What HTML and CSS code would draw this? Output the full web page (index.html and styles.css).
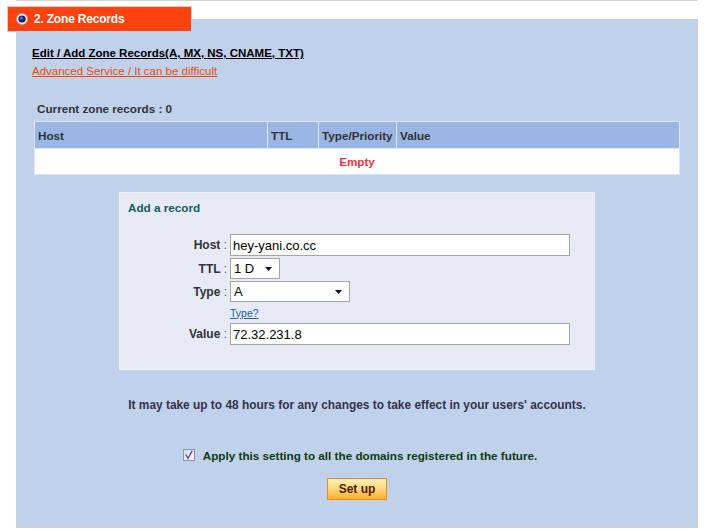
FILE: index.html
```html
<!DOCTYPE html>
<html>
<head>
<meta charset="utf-8">
<link rel="stylesheet" href="styles.css">
</head>
<body>
<div class="topline"></div>
<div class="tab">
  <svg class="tab-icon" width="12" height="12" viewBox="0 0 12 12">
    <defs>
      <radialGradient id="dot" cx="0.42" cy="0.4" r="0.6">
        <stop offset="0" stop-color="#8a8ad8"/>
        <stop offset="0.5" stop-color="#20207a"/>
        <stop offset="1" stop-color="#0a0a40"/>
      </radialGradient>
    </defs>
    <circle cx="6" cy="6" r="5.5" fill="#f4f4f8" stroke="#9a9aa8" stroke-width="0.8"/>
    <circle cx="6" cy="6" r="3.6" fill="url(#dot)"/>
  </svg>
  <span class="tab-title">2. Zone Records</span>
</div>
<div class="panel">
  <div class="intro">
    <div class="intro-title">Edit / Add Zone Records(A, MX, NS, CNAME, TXT)</div>
    <a class="intro-link" href="#">Advanced Service / It can be difficult</a>
  </div>
  <div class="current">Current zone records : 0</div>
  <table class="records">
    <thead>
      <tr>
        <th class="c-host">Host</th>
        <th class="c-ttl">TTL</th>
        <th class="c-type">Type/Priority</th>
        <th class="c-value">Value</th>
      </tr>
    </thead>
    <tbody>
      <tr><td class="empty" colspan="4">Empty</td></tr>
    </tbody>
  </table>

  <div class="addbox">
    <div class="addbox-title">Add a record</div>
    <div class="form">
      <div class="row">
        <div class="label">Host <span class="colon">:</span></div>
        <div class="field"><div class="input wide">hey-yani.co.cc</div></div>
      </div>
      <div class="row">
        <div class="label">TTL <span class="colon">:</span></div>
        <div class="field">
          <div class="select ttl"><span>1 D</span>
            <svg width="7" height="4" viewBox="0 0 7 4"><path d="M0 0 H7 L3.5 4 Z" fill="#0b0b55"/></svg>
          </div>
        </div>
      </div>
      <div class="row">
        <div class="label">Type <span class="colon">:</span></div>
        <div class="field">
          <div class="select type"><span>A</span>
            <svg width="7" height="4" viewBox="0 0 7 4"><path d="M0 0 H7 L3.5 4 Z" fill="#0b0b55"/></svg>
          </div>
        </div>
      </div>
      <div class="row help-row">
        <div class="label"></div>
        <div class="field"><a class="help" href="#">Type?</a></div>
      </div>
      <div class="row">
        <div class="label">Value <span class="colon">:</span></div>
        <div class="field"><div class="input wide">72.32.231.8</div></div>
      </div>
    </div>
  </div>

  <p class="notice">It may take up to 48 hours for any changes to take effect in your users' accounts.</p>

  <div class="apply">
    <svg class="check" width="12" height="12" viewBox="0 0 12 12">
      <defs>
        <linearGradient id="cb" x1="0" y1="0" x2="1" y2="1">
          <stop offset="0" stop-color="#d8d8e2"/>
          <stop offset="1" stop-color="#f6f6fa"/>
        </linearGradient>
      </defs>
      <rect x="0.5" y="0.5" width="11" height="11" fill="url(#cb)" stroke="#8e92a6"/>
      <path d="M2.8 5.6 L5 9.4 L9.2 1.6" fill="none" stroke="#4f4fb0" stroke-width="1.3"/>
    </svg>
    <span class="apply-text">Apply this setting to all the domains registered in the future.</span>
  </div>

  <div class="actions">
    <button class="setup" type="button">Set up</button>
  </div>
</div>
</body>
</html>
```

FILE: styles.css
```css
html, body {
  margin: 0;
  padding: 0;
  background: #ffffff;
}

body {
  font-family: "Liberation Sans", Arial, sans-serif;
  font-size: 12px;
  color: #333333;
}

.topline {
  width: 681px;
  height: 1px;
  margin-left: 16px;
  background: #d2d2d2;
}

.tab {
  position: relative;
  z-index: 1;
  display: flex;
  align-items: center;
  box-sizing: border-box;
  width: 185px;
  height: 26px;
  margin: 5px 0 0 7px;
  padding-left: 8px;
  background: #ff420e;
  border: 1px solid #cfcfcf;
}

.tab-icon {
  display: block;
  flex: none;
}

.tab-title {
  margin-left: 6px;
  color: #ffffff;
  font-weight: bold;
  font-size: 12px;
  letter-spacing: -0.2px;
}

.panel {
  box-sizing: border-box;
  width: 682px;
  margin: -13px 0 0 16px;
  padding: 24px 0 27px 0;
  background: #c0d1ec;
  border: 1px solid #cdcdcd;
}

.intro {
  margin-left: 15px;
}

.intro-title {
  line-height: 18px;
  font-weight: bold;
  font-size: 11.5px;
  color: #000000;
  text-decoration: underline;
}

.intro-link {
  display: inline-block;
  line-height: 18px;
  font-size: 11.5px;
  color: #f04a00;
  text-decoration: underline;
}

.current {
  margin: 20px 0 0 20px;
  line-height: 18px;
  font-weight: bold;
  font-size: 11.7px;
  color: #333333;
}

.records {
  margin: 3px 0 0 17px;
  width: 646px;
  border-collapse: collapse;
  border: 1px solid #dfe4ee;
  background: #ffffff;
}

.records th {
  height: 26px;
  padding: 0 0 0 3px;
  text-align: left;
  font-size: 11.7px;
  font-weight: bold;
  color: #333333;
  background: #9ab6e2;
  border-right: 1px solid #dde6f4;
  border-bottom: 1px solid #dde6f4;
}

.records th.c-value {
  border-right: none;
}

.c-host { width: 229px; }
.c-ttl { width: 47px; }
.c-type { width: 74px; }

.records td.empty {
  height: 25px;
  padding: 0;
  text-align: center;
  font-weight: bold;
  font-size: 11.7px;
  color: #ee3344;
}

.addbox {
  box-sizing: border-box;
  width: 476px;
  margin: 17px auto 0;
  padding: 7px 0 24px 0;
  background: #e6eaf4;
  border: 1px solid #edf0f7;
}

.addbox-title {
  margin-left: 8px;
  line-height: 16px;
  font-weight: bold;
  font-size: 11.7px;
  color: #145c5c;
}

.form {
  display: flex;
  flex-direction: column;
  gap: 2px;
  margin-top: 18px;
}

.row {
  display: flex;
  align-items: center;
}

.label {
  box-sizing: border-box;
  width: 110px;
  padding-right: 3px;
  text-align: right;
  font-weight: bold;
  font-size: 12px;
  color: #333333;
}

.colon {
  font-weight: normal;
  color: #555555;
}

.field {
  display: flex;
  align-items: center;
}

.input {
  box-sizing: border-box;
  height: 22px;
  padding: 0 2px;
  display: flex;
  align-items: center;
  background: #ffffff;
  border: 1px solid #a5a5a5;
  font-size: 13px;
  color: #000000;
}

.input.wide {
  width: 340px;
}

.select {
  box-sizing: border-box;
  height: 21px;
  display: flex;
  align-items: center;
  justify-content: space-between;
  padding: 0 7px 0 3px;
  background: #ffffff;
  border: 1px solid #a5a5a5;
  font-size: 13px;
  color: #000000;
}

.select svg {
  display: block;
}

.select.ttl {
  width: 50px;
}

.select.type {
  width: 120px;
}

.help-row {
  height: 17px;
}

.help {
  font-size: 10.5px;
  color: #1a5e9e;
  text-decoration: underline;
}

.notice {
  margin: 26px 0 0 0;
  line-height: 18px;
  text-align: center;
  font-weight: bold;
  font-size: 11.9px;
  color: #33334a;
}

.apply {
  margin-top: 32px;
  display: flex;
  justify-content: center;
  align-items: center;
  gap: 8px;
  height: 18px;
  padding-left: 6px;
}

.check {
  display: block;
  flex: none;
}

.apply-text {
  font-weight: bold;
  font-size: 11.7px;
  color: #0d3a12;
}

.actions {
  margin-top: 14px;
  display: flex;
  justify-content: center;
}

.setup {
  box-sizing: border-box;
  width: 60px;
  height: 22px;
  padding: 0;
  font-family: "Liberation Sans", Arial, sans-serif;
  font-weight: bold;
  font-size: 12px;
  color: #4a1e00;
  background: linear-gradient(#fff2bf, #ffd77a 50%, #ffae2c);
  border: 1px solid #e8901c;
  border-radius: 0;
}
```
